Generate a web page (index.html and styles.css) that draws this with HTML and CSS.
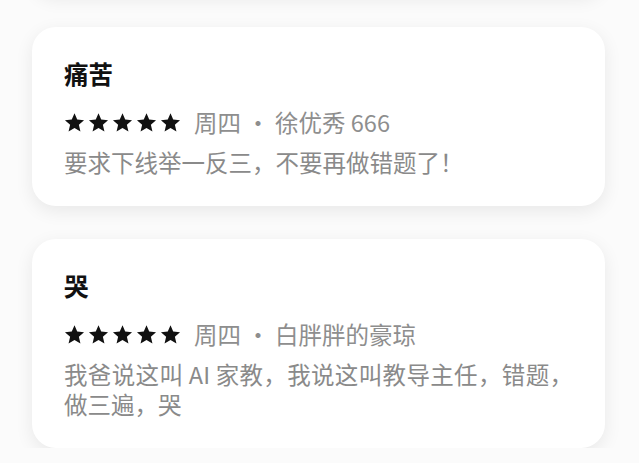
FILE: index.html
```html
<!DOCTYPE html>
<html lang="zh-CN">
<head>
    <meta charset="UTF-8">
    <meta name="viewport" content="width=device-width, initial-scale=1.0">
    <title>评价</title>
    <link rel="stylesheet" href="styles.css">
</head>
<body>
    <div class="review-list">
        <div class="review-card review-card-prev"></div>

        <div class="review-card">
            <h3 class="review-title">痛苦</h3>
            <div class="review-meta">
                <span class="stars">
                    <svg viewBox="0 0 24 24"><path d="M12 1.5l3.1 7.2 7.8.7-5.9 5.2 1.8 7.7L12 18.2l-6.8 4.1 1.8-7.7-5.9-5.2 7.8-.7z"/></svg>
                    <svg viewBox="0 0 24 24"><path d="M12 1.5l3.1 7.2 7.8.7-5.9 5.2 1.8 7.7L12 18.2l-6.8 4.1 1.8-7.7-5.9-5.2 7.8-.7z"/></svg>
                    <svg viewBox="0 0 24 24"><path d="M12 1.5l3.1 7.2 7.8.7-5.9 5.2 1.8 7.7L12 18.2l-6.8 4.1 1.8-7.7-5.9-5.2 7.8-.7z"/></svg>
                    <svg viewBox="0 0 24 24"><path d="M12 1.5l3.1 7.2 7.8.7-5.9 5.2 1.8 7.7L12 18.2l-6.8 4.1 1.8-7.7-5.9-5.2 7.8-.7z"/></svg>
                    <svg viewBox="0 0 24 24"><path d="M12 1.5l3.1 7.2 7.8.7-5.9 5.2 1.8 7.7L12 18.2l-6.8 4.1 1.8-7.7-5.9-5.2 7.8-.7z"/></svg>
                </span>
                <span class="review-info">周四 · 徐优秀 666</span>
            </div>
            <p class="review-text">要求下线举一反三，不要再做错题了！</p>
        </div>

        <div class="review-card">
            <h3 class="review-title">哭</h3>
            <div class="review-meta">
                <span class="stars">
                    <svg viewBox="0 0 24 24"><path d="M12 1.5l3.1 7.2 7.8.7-5.9 5.2 1.8 7.7L12 18.2l-6.8 4.1 1.8-7.7-5.9-5.2 7.8-.7z"/></svg>
                    <svg viewBox="0 0 24 24"><path d="M12 1.5l3.1 7.2 7.8.7-5.9 5.2 1.8 7.7L12 18.2l-6.8 4.1 1.8-7.7-5.9-5.2 7.8-.7z"/></svg>
                    <svg viewBox="0 0 24 24"><path d="M12 1.5l3.1 7.2 7.8.7-5.9 5.2 1.8 7.7L12 18.2l-6.8 4.1 1.8-7.7-5.9-5.2 7.8-.7z"/></svg>
                    <svg viewBox="0 0 24 24"><path d="M12 1.5l3.1 7.2 7.8.7-5.9 5.2 1.8 7.7L12 18.2l-6.8 4.1 1.8-7.7-5.9-5.2 7.8-.7z"/></svg>
                    <svg viewBox="0 0 24 24"><path d="M12 1.5l3.1 7.2 7.8.7-5.9 5.2 1.8 7.7L12 18.2l-6.8 4.1 1.8-7.7-5.9-5.2 7.8-.7z"/></svg>
                </span>
                <span class="review-info">周四 · 白胖胖的豪琼</span>
            </div>
            <p class="review-text">我爸说这叫 AI 家教，我说这叫教导主任，错题，做三遍，哭</p>
        </div>
    </div>
</body>
</html>
```

FILE: styles.css
```css
body {
    margin: 0;
    background-color: #fbfbfb;
    font-family: "Noto Sans CJK SC", "Noto Sans", sans-serif;
    overflow: hidden;
}
.review-list {
    display: flex;
    flex-direction: column;
    gap: 33px;
    padding: 0 34px 0 32px;
    margin-top: -106px;
}
.review-card {
    background-color: #fff;
    border-radius: 24px;
    box-shadow: 0 5px 18px rgba(0, 0, 0, 0.08);
    padding: 31px 32px 29px 32px;
}
.review-card-prev {
    height: 40px;
}
.review-title {
    margin: 0;
    font-size: 24.5px;
    line-height: 32px;
    font-weight: 700;
    color: #111;
}
.review-meta {
    display: flex;
    align-items: center;
    margin-top: 17px;
    height: 30px;
}
.stars {
    display: flex;
    gap: 3px;
    margin-right: 13px;
}
.stars svg {
    width: 21px;
    height: 21px;
    fill: #111;
}
.review-info {
    font-size: 23.5px;
    line-height: 30px;
    color: #8e8e8e;
}
.review-text {
    margin: 10px 0 0;
    font-size: 23.5px;
    line-height: 30px;
    color: #8a8a8a;
    text-align: justify;
}
```
